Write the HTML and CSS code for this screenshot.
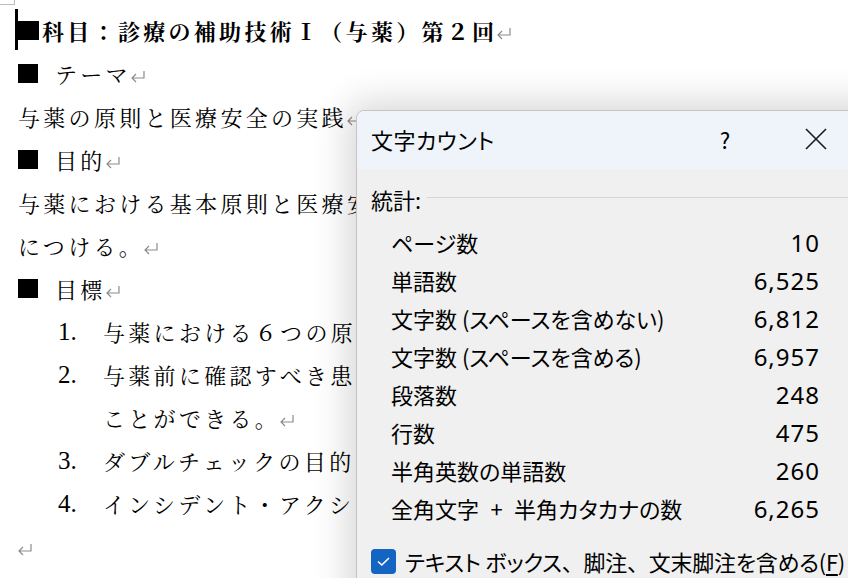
FILE: index.html
```html
<!DOCTYPE html>
<html lang="ja">
<head>
<meta charset="utf-8">
<title>文字カウント</title>
<link rel="stylesheet" href="styles.css">
</head>
<body>
<div class="page">
  <div class="cropmark"></div>
  <div class="doc">
    <p class="line bold"><span class="cursor"></span><span class="sq sq-tight"></span>科目：診療の補助技術Ⅰ（与薬）第２回<svg class="pm" viewBox="0 0 14 12"><path d="M13 0V7H1M5 3L1 7L5 11"/></svg></p>
    <p class="line"><span class="sq"></span>テーマ<svg class="pm" viewBox="0 0 14 12"><path d="M13 0V7H1M5 3L1 7L5 11"/></svg></p>
    <p class="line">与薬の原則と医療安全の実践<svg class="pm" viewBox="0 0 14 12"><path d="M13 0V7H1M5 3L1 7L5 11"/></svg></p>
    <p class="line"><span class="sq"></span>目的<svg class="pm" viewBox="0 0 14 12"><path d="M13 0V7H1M5 3L1 7L5 11"/></svg></p>
    <p class="line clip">与薬における基本原則と医療安</p>
    <p class="line">につける。<svg class="pm" viewBox="0 0 14 12"><path d="M13 0V7H1M5 3L1 7L5 11"/></svg></p>
    <p class="line"><span class="sq"></span>目標<svg class="pm" viewBox="0 0 14 12"><path d="M13 0V7H1M5 3L1 7L5 11"/></svg></p>
    <div class="item"><span class="num">1.</span><span class="txt">与薬における６つの原</span></div>
    <div class="item"><span class="num">2.</span><span class="txt">与薬前に確認すべき患</span></div>
    <div class="item"><span class="num"></span><span class="txt">ことができる。<svg class="pm" viewBox="0 0 14 12"><path d="M13 0V7H1M5 3L1 7L5 11"/></svg></span></div>
    <div class="item"><span class="num">3.</span><span class="txt">ダブルチェックの目的</span></div>
    <div class="item"><span class="num">4.</span><span class="txt">インシデント・アクシ</span></div>
    <p class="line"><svg class="pm" viewBox="0 0 14 12"><path d="M13 0V7H1M5 3L1 7L5 11"/></svg></p>
  </div>

  <div class="dialog">
    <div class="titlebar">
      <span class="title">文字カウント</span>
      <span class="help">?</span>
      <span class="close"><svg viewBox="0 0 22 22"><path d="M1 1L21 21M21 1L1 21"/></svg></span>
    </div>
    <div class="body">
      <div class="group">
        <span class="group-label">統計:</span>
        <span class="rule"></span>
      </div>
      <div class="stats">
        <div class="row"><span>ページ数</span><span class="val">10</span></div>
        <div class="row"><span>単語数</span><span class="val">6,525</span></div>
        <div class="row"><span>文字数 (スペースを含めない)</span><span class="val">6,812</span></div>
        <div class="row"><span>文字数 (スペースを含める)</span><span class="val">6,957</span></div>
        <div class="row"><span>段落数</span><span class="val">248</span></div>
        <div class="row"><span>行数</span><span class="val">475</span></div>
        <div class="row"><span>半角英数の単語数</span><span class="val">260</span></div>
        <div class="row"><span class="wide">全角文字 + 半角カタカナの数</span><span class="val">6,265</span></div>
      </div>
      <div class="check">
        <span class="box"><svg viewBox="0 0 25 25"><path d="M7 12.5L10.8 16L18 9"/></svg></span>
        <span class="check-label">テキスト ボックス<span class="fw">、</span>脚注<span class="fw">、</span>文末脚注を含める(<u>F</u>)</span>
      </div>
    </div>
  </div>
</div>
</body>
</html>
```
FILE: styles.css
```css
html, body {
  margin: 0;
  padding: 0;
  background: #ffffff;
}
body {
  width: 848px;
  height: 578px;
  overflow: hidden;
}
.page {
  position: relative;
  width: 848px;
  height: 578px;
  overflow: hidden;
  background: #ffffff;
}
.cropmark {
  position: absolute;
  left: 0;
  top: 0;
  width: 14px;
  height: 4px;
  border-right: 1px solid #bdbdbd;
  border-bottom: 1px solid #bdbdbd;
}
.doc {
  padding: 9px 0 0 18px;
  font-family: "Noto Serif CJK JP", "Liberation Serif", "Noto Sans CJK JP", serif;
  font-size: 22px;
  letter-spacing: 3.3px;
  color: #000;
  white-space: nowrap;
}
.line {
  position: relative;
  margin: 0;
  height: 43px;
  line-height: 43px;
  display: flex;
  align-items: center;
}
.clip {
  width: 338px;
  overflow: hidden;
}
.bold {
  font-weight: bold;
}
.cursor {
  position: absolute;
  left: -3px;
  top: 0;
  width: 3px;
  height: 41px;
  background: #000;
}
.sq {
  display: inline-block;
  width: 20px;
  height: 19px;
  background: #000;
  margin-right: 17px;
  flex: none;
}
.sq-tight {
  width: 21px;
  margin-right: 3px;
}
.pm {
  width: 14px;
  height: 12px;
  margin-left: 0;
  margin-top: 6px;
  flex: none;
  fill: none;
  stroke: #8c8c8c;
  stroke-width: 1.2;
}
.item {
  display: flex;
  align-items: center;
  height: 43px;
  line-height: 43px;
  padding-left: 40px;
}
.num {
  width: 45px;
  flex: none;
  font-family: "Liberation Serif", serif;
  font-size: 25px;
  letter-spacing: 0;
}
.txt {
  display: flex;
  align-items: center;
}

.dialog {
  position: absolute;
  left: 356px;
  top: 110px;
  width: 540px;
  height: 520px;
  background: #f0f0f0;
  border: 1px solid #c4c4c4;
  border-radius: 8px;
  box-shadow: 0 0 36px 8px rgba(0, 0, 0, 0.16);
  font-family: "Noto Sans CJK JP", "Noto Sans", sans-serif;
  font-feature-settings: "palt";
  color: #000;
  overflow: hidden;
  box-sizing: border-box;
}
.titlebar {
  height: 56px;
  background: #eef4f9;
  display: flex;
  align-items: center;
  padding-left: 14px;
  padding-bottom: 2px;
  font-size: 22px;
}
.title {
  flex: 1;
  letter-spacing: 0.5px;
}
.help {
  width: 40px;
  text-align: center;
  font-size: 22px;
  margin-right: 49px;
}
.close {
  width: 44px;
  display: flex;
  justify-content: center;
  margin-right: 57px;
}
.close svg {
  width: 22px;
  height: 22px;
  fill: none;
  stroke: #1a1a1a;
  stroke-width: 1.6;
}
.body {
  padding: 11px 0 0 14px;
}
.group {
  display: flex;
  align-items: center;
  height: 38px;
  font-size: 22px;
}
.rule {
  flex: 1;
  height: 1px;
  background: #d6d6d6;
  margin-left: 6px;
  margin-top: -4px;
}
.stats {
  padding-left: 20px;
  width: 428px;
  margin-top: 5px;
}
.row {
  display: flex;
  justify-content: space-between;
  align-items: center;
  height: 38px;
  font-size: 22px;
}
.wide {
  word-spacing: 6.5px;
}
.val {
  font-family: "Noto Sans", sans-serif;
  font-size: 24px;
  letter-spacing: 1px;
  margin-right: -1px;
}
.check {
  display: flex;
  align-items: center;
  height: 38px;
  margin-top: 15px;
  font-size: 22px;
}
.box {
  width: 25px;
  height: 25px;
  border-radius: 4px;
  background: #1365c1;
  display: flex;
  flex: none;
  margin-right: 9px;
}
.box svg {
  width: 25px;
  height: 25px;
  fill: none;
  stroke: #ffffff;
  stroke-width: 1.6;
}
.check-label {
  letter-spacing: -0.25px;
  white-space: nowrap;
}
.fw {
  font-feature-settings: normal;
}
.check-label u {
  text-underline-offset: 3px;
}
```
